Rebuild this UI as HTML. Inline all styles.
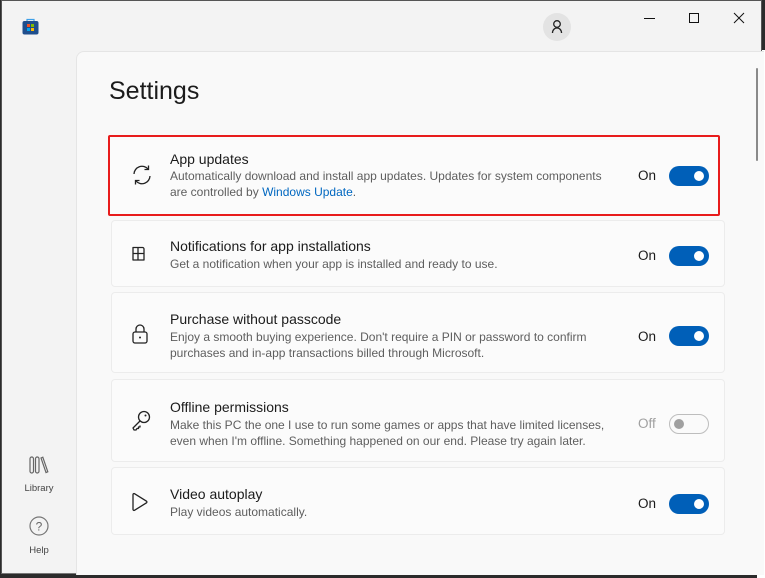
<!DOCTYPE html>
<html><head><style>
*{margin:0;padding:0;box-sizing:border-box}
body{width:765px;height:578px;overflow:hidden;background:#2b2b2b;font-family:"Segoe UI","Liberation Sans",sans-serif;position:relative}
.bgright{position:absolute;left:757px;top:50px;width:8px;height:528px;background:#fff}
.win{position:absolute;left:1px;top:0;width:761px;height:574px;background:#f3f3f3;border:1px solid #555;border-bottom:1px solid #777}
.panel{position:absolute;left:74px;top:50px;width:688px;height:524px;background:#f9f9f9;border-top:1px solid #e5e5e5;border-left:1px solid #e5e5e5;border-top-left-radius:8px}
h1{position:absolute;left:109px;top:77px;font-size:25px;font-weight:normal;color:#1b1b1b}
.card{position:absolute;left:111px;width:614px;background:#fbfbfb;border:1px solid #ececec;border-radius:4px}
.card.hl{left:108px;width:612px;border:2px solid #e81c1c;border-radius:2px}
.ic{position:absolute;left:18px}
.t{position:absolute;left:58px;font-size:14px;color:#1b1b1b;white-space:nowrap}
.d{position:absolute;left:58px;font-size:12px;color:#5e5e5e;line-height:16px;white-space:nowrap}
.on{position:absolute;left:526px;font-size:13.5px;color:#1b1b1b}
.tg{position:absolute;left:557px;width:40px;height:20px;border-radius:10px;background:#005fb8}
.tg::after{content:"";position:absolute;right:5px;top:5px;width:10px;height:10px;border-radius:50%;background:#fff}
.tg.off{background:#fafafa;border:1px solid #bdbdbd}
.tg.off::after{left:4px;top:4px;background:#a0a0a0}
.hl .ic{left:20px}.hl .t,.hl .d{left:60px}.hl .on{left:528px}.hl .tg{left:559px}
a{color:#0067c0;text-decoration:none}
.side{position:absolute;font-size:9.5px;color:#444;width:40px;text-align:center}
</style></head><body>
<div class="bgright"></div>
<div class="win">
 <svg style="position:absolute;left:20px;top:17px" width="17" height="17" viewBox="0 0 17 17"><rect x="0.5" y="3" width="16" height="13.5" rx="2" fill="#1f4e8c"/><path d="M5 3V1.5h7V3" stroke="#3ea0e8" fill="none" stroke-width="1.2"/><rect x="5" y="6" width="3" height="3" fill="#f25022"/><rect x="9" y="6" width="3" height="3" fill="#7fba00"/><rect x="5" y="10" width="3" height="3" fill="#00a4ef"/><rect x="9" y="10" width="3" height="3" fill="#ffb900"/></svg>
 <div style="position:absolute;left:541px;top:12px;width:28px;height:28px;border-radius:50%;background:#e3e3e3"></div>
 <svg style="position:absolute;left:548px;top:18px" width="14" height="16" viewBox="0 0 14 16"><circle cx="7" cy="5" r="3.3" fill="none" stroke="#222" stroke-width="1.3"/><path d="M2.5 14c0-3 2-5 4.5-5s4.5 2 4.5 5" fill="none" stroke="#222" stroke-width="1.3"/></svg>
 <div style="position:absolute;left:642px;top:17px;width:11px;height:1px;background:#111"></div>
 <div style="position:absolute;left:687px;top:12px;width:10px;height:10px;border:1px solid #111"></div>
 <svg style="position:absolute;left:731px;top:11px" width="12" height="12"><path d="M1 1L11 11M11 1L1 11" stroke="#111" stroke-width="1"/></svg>
 <div class="panel"></div>
 <div style="position:absolute;left:754px;top:67px;width:2px;height:93px;background:#8a8a8a;border-radius:1px"></div>
 <svg style="position:absolute;left:27px;top:455px" width="20" height="18" viewBox="0 0 20 18"><rect x="1" y="1" width="3.5" height="16" rx="1.7" fill="none" stroke="#666" stroke-width="1.2"/><rect x="6.5" y="1" width="3.5" height="16" rx="1.7" fill="none" stroke="#666" stroke-width="1.2"/><path d="M12 2l1.8-.8 5 14.6-1.8.8z" fill="none" stroke="#666" stroke-width="1.2"/></svg>
 <div class="side" style="left:17px;top:482px">Library</div>
 <svg style="position:absolute;left:27px;top:515px" width="20" height="20"><circle cx="10" cy="10" r="9" fill="none" stroke="#777" stroke-width="1.2"/><text x="10" y="14.5" font-size="12" text-anchor="middle" fill="#666" font-family="Liberation Sans">?</text></svg>
 <div class="side" style="left:17px;top:544px">Help</div>
</div>
<h1>Settings</h1>

<div class="card hl" style="top:135px;height:81px">
 <svg class="ic" style="top:26px" width="24" height="24" viewBox="0 0 24 24"><path d="M4 11a8 8 0 0 1 14-5M20 13a8 8 0 0 1-14 5" fill="none" stroke="#222" stroke-width="1.3"/><path d="M18.5 2.5v4h-4M5.5 21.5v-4h4" fill="none" stroke="#222" stroke-width="1.3"/></svg>
 <div class="t" style="top:14px">App updates</div>
 <div class="d" style="top:31px">Automatically download and install app updates. Updates for system components<br>are controlled by <a>Windows Update</a>.</div>
 <div class="on" style="top:31px">On</div><div class="tg" style="top:29px"></div>
</div>

<div class="card" style="top:220px;height:67px">
 <svg class="ic" style="top:23px" width="20" height="20" viewBox="0 0 20 20"><path d="M3 3.5h5v6h6v6.5H3zM3 9.5h5v6.5M8 3.5h4.5a1.5 1.5 0 0 1 1.5 1.5v4.5" fill="none" stroke="#222" stroke-width="1.3" stroke-linejoin="round"/></svg>
 <div class="t" style="top:17px">Notifications for app installations</div>
 <div class="d" style="top:35px">Get a notification when your app is installed and ready to use.</div>
 <div class="on" style="top:27px">On</div><div class="tg" style="top:25px"></div>
</div>

<div class="card" style="top:292px;height:81px">
 <svg class="ic" style="top:30px" width="20" height="22" viewBox="0 0 20 22"><rect x="3" y="9" width="14" height="11" rx="2" fill="none" stroke="#222" stroke-width="1.3"/><path d="M6 9V6a4 4 0 0 1 8 0v3" fill="none" stroke="#222" stroke-width="1.3"/><circle cx="10" cy="14.5" r="1" fill="#222"/></svg>
 <div class="t" style="top:18px">Purchase without passcode</div>
 <div class="d" style="top:36px">Enjoy a smooth buying experience. Don't require a PIN or password to confirm<br>purchases and in-app transactions billed through Microsoft.</div>
 <div class="on" style="top:36px">On</div><div class="tg" style="top:33px"></div>
</div>

<div class="card" style="top:379px;height:83px">
 <svg class="ic" style="top:29px" width="22" height="22" viewBox="0 0 22 22"><circle cx="14" cy="8" r="5.5" fill="none" stroke="#222" stroke-width="1.3"/><path d="M10 12L3 19l1 2h2l1-1.5h1.5V18H10v-1.5" fill="none" stroke="#222" stroke-width="1.3" stroke-linejoin="round"/><circle cx="15.5" cy="6.5" r="1" fill="#222"/></svg>
 <div class="t" style="top:19px">Offline permissions</div>
 <div class="d" style="top:37px">Make this PC the one I use to run some games or apps that have limited licenses,<br>even when I'm offline. Something happened on our end. Please try again later.</div>
 <div class="on" style="top:36px;color:#a0a0a0">Off</div><div class="tg off" style="top:34px"></div>
</div>

<div class="card" style="top:467px;height:68px">
 <svg class="ic" style="top:23px" width="20" height="22" viewBox="0 0 20 22"><path d="M3 3.5v15a1 1 0 0 0 1.5.8l12-7.5a1 1 0 0 0 0-1.6l-12-7.5A1 1 0 0 0 3 3.5z" fill="none" stroke="#222" stroke-width="1.3"/></svg>
 <div class="t" style="top:18px">Video autoplay</div>
 <div class="d" style="top:36px">Play videos automatically.</div>
 <div class="on" style="top:28px">On</div><div class="tg" style="top:26px"></div>
</div>
</body></html>
